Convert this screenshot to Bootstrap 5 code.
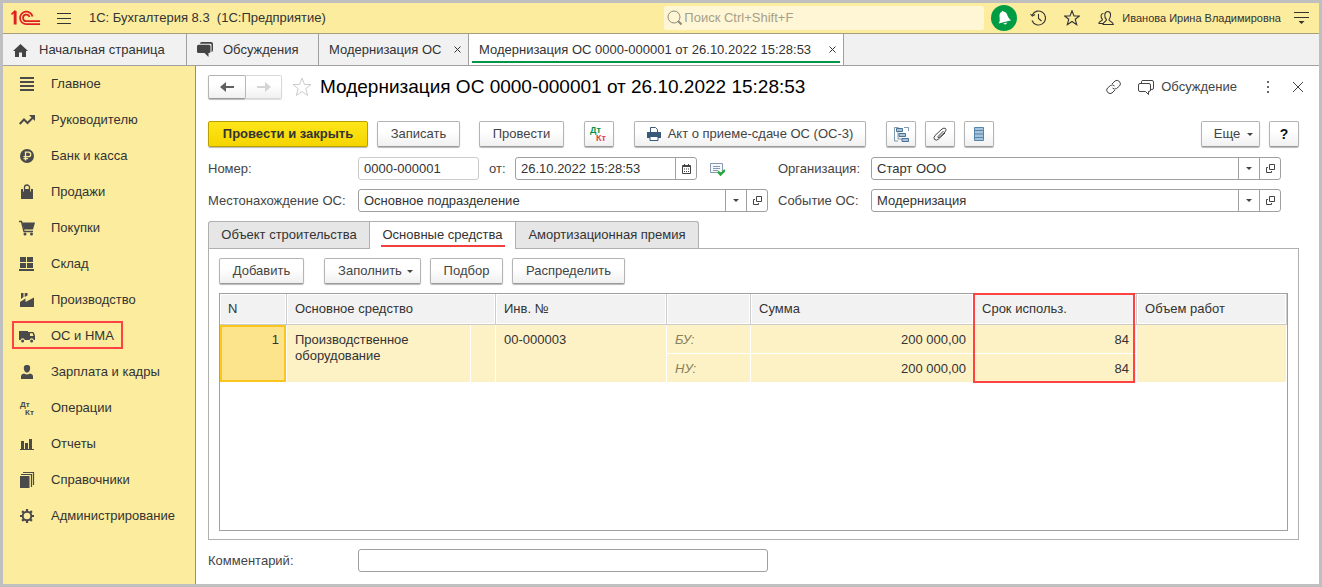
<!DOCTYPE html>
<html lang="ru">
<head>
<meta charset="utf-8">
<meta name="viewport" content="width=device-width, initial-scale=1">
<title>Модернизация ОС 0000-000001 от 26.10.2022 15:28:53</title>
<link href="https://cdn.jsdelivr.net/npm/bootstrap@5.3.0/dist/css/bootstrap.min.css" rel="stylesheet">
<script src="https://cdn.jsdelivr.net/npm/bootstrap@5.3.0/dist/js/bootstrap.bundle.min.js" defer></script>
<style>
body{font-family:"Liberation Sans",Arial,sans-serif;font-size:13px;line-height:16px;color:#333;background:#fff;border:3px solid #bfbfbf;min-height:100vh}
svg{display:block;flex:none}
a{color:inherit;text-decoration:none}
.ic{fill:none;stroke:currentColor}
.plain{border:0;background:none;padding:0;color:inherit}
.gap-s{margin-left:9px}
.gap-l{margin-left:20px}
/* title bar */
.topbar{height:31px;background:#fbec9e;border-bottom:1px solid #a6a07a;padding:0 10px 0 8px}
.app-title{margin-left:18px;white-space:pre}
.finder{width:320px;height:24px;background:#fef6d5;border-radius:2px;padding:0 3px;gap:2px;color:#8d8a78}
.finder input{border:0;background:none;outline:0;flex:1;color:#8d8a78;padding:0;min-width:0}
.finder input::placeholder{color:#a5a08a;opacity:1}
.bell{width:26px;height:26px;border-radius:50%;background:#009c43;margin-left:7px}
.tools{gap:18px;margin-left:13px}
.user{font-size:11px;margin:0 13px 0 8px}
/* window tabs */
.wtabs{height:32px;background:#f1f1f1;border-bottom:1px solid #a0a0a0}
.wtab{border-right:1px solid #a0a0a0;padding:0 7px 0 10px;gap:11px}
.wtab.home{width:184px}
.wtab.talk{width:132px;gap:10px}
.wtab.list{width:150px}
.wtab.current{background:#fff;padding:0 3px;width:375px}
.wtab.current>div{border-bottom:2px solid #009646;height:29px;padding:4px 4px 0 7px}
/* sections */
.side{width:193px;background:#fbec9e;border-right:1px solid #95906f}
.side li{height:36px}
.side a{height:28px;border:2px solid transparent;padding:3px 7px 0 5px;margin:0 0 3px 9px;gap:16px;color:#4a4a4a}
.side a.marked{border-color:#ff4242}
.side span{color:#333}
/* form */
.sheet{padding:9px 20px 12px 12px;color:#444}
.doc-title{font-size:19px;line-height:24px;color:#000;margin:0 0 0 8px}
.to-fav{margin-left:10px;color:#ccc}
.to-chat{margin-left:16px;gap:7px}
.to-more{margin-left:29px}
.to-close{margin:0 -4px 0 23px}
.cmds{margin-top:22px}
.cmd{height:26px;border:1px solid #b4b4b4;border-bottom-color:#999;border-radius:2px;background:linear-gradient(#fff 40%,#f0f0f0);box-shadow:0 1px 1px #bbb;color:#444;padding:0;white-space:nowrap;width:85px}
.cmd.sq{width:30px}
.cmd.help{font-size:14px;color:#111}
.cmd.main{width:160px;background:linear-gradient(#ffe61a,#f5d500);border-color:#b8a000;font-weight:bold;color:#333}
.cmd.act{width:232px;gap:7px}
.cmd.more{width:59px;gap:7px;padding-left:6px}
.cmd.fill{width:97px;gap:5px;padding-left:6px}
.cmd.pick{width:73px}
.cmd.split{width:113px}
.cmd.save{width:83px}
.cmd.post{margin-left:19px}
.navpair .cmd{height:24px;width:38px;color:#606060}
.navpair .cmd:last-child{width:36px;border-color:#d8d8d8;border-left:0;border-radius:0 2px 2px 0;color:#d4d4d4;box-shadow:0 1px 1px #ddd}
.caret{border:3px solid transparent;border-top-color:#444;border-bottom:0}
.fields{margin-top:9px;padding-right:18px}
.fields.first{margin-top:10px}
.lab{width:150px;white-space:nowrap}
.lab2{width:93px;white-space:nowrap}
.lab2.far{margin-left:53px}
.lab2.near{margin-left:10px}
.lab-at{width:36px;padding-left:10px}
.box{height:23px;border:1px solid #a0a0a0;border-radius:3px;background:#fff}
.box input{border:0;outline:0;padding:0 5px;min-width:0;width:100%;background:none;color:#333;height:100%}
.box button{width:21px;flex:none;border:0;border-left:1px solid #a0a0a0;background:none;padding:0;color:#444}
.box.numbox{width:121px;border-color:#ccc}
.box.datebox{width:182px}
.state{margin-left:13px;color:#8a9bb0}
.wide{width:410px}
.ptab{height:27px;width:162px;border:1px solid #b0b0b0;border-bottom:0;background:#e6e6e6;color:#333;padding:0;border-left-width:0}
.ptab:first-child{border-left-width:1px;border-radius:3px 0 0 0}
.ptab:last-child{border-radius:0 3px 0 0;width:183px}
.ptab.active{background:#fff;width:146px;height:28px;margin-bottom:-1px;padding:0 0 2px;position:relative}
.ptab.active span{border-bottom:2px solid #f04040;padding:4px 2px 2px}
.panel{border:1px solid #b0b0b0;padding:9px 10px 8px}
.gridbox{border:1px solid #a0a0a0;margin-top:9px}
.gridtab{width:100%;table-layout:fixed;border-collapse:separate;border-spacing:0;color:#333}
.c-n{width:67px}.c-os{width:184px}.c-pic{width:25px}.c-inv{width:171px}.c-kind{width:84px}.c-sum{width:223px}.c-term{width:163px}
.gridtab th{font-weight:normal;background:#f2f2f2;height:31px;padding:0 8px;border-right:1px solid #ccc;border-bottom:1px solid #ccc;box-shadow:inset 0 0 0 1px #fff;position:relative}
.gridtab td{background:#fdf1c6;height:29px;padding:7px 8px 5px;vertical-align:top;border-right:1px solid #fff;border-bottom:1px solid #fff}
.gridtab td.num{text-align:right;padding-right:7px}
.gridtab .cell{background:#fce48d;box-shadow:inset 0 0 0 2px #fac61e}
.gridtab .kind{font-style:italic;color:#85805f}
.focus-frame{position:absolute;left:-1px;right:1px;top:-1px;height:90px;border:2px solid #ff4242;z-index:2}
</style>
</head>
<body class="d-flex flex-column">
<header class="topbar d-flex align-items-center">
  <svg width="30" height="16" viewBox="0 0 30 16" class="ic" style="color:#e02020" stroke-width="1.7"><path d="M.5 4.500L3.500 1.500V14.500M4.800 1V14.500" stroke-width="1.600"/><path d="M21.500 6.500A6.300 6.300 0 1 0 15.500 14.200H29"/><path d="M18.500 7A3.300 3.300 0 1 0 15.500 11.200H29"/></svg>
  <button class="plain ms-3" aria-label="Меню"><svg width="14" height="13" class="ic"><path d="M0 1.500H14M0 6.500H14M0 11.500H14"/></svg></button>
  <span class="app-title">1С: Бухгалтерия 8.3  (1С:Предприятие)</span>
  <label class="finder d-flex align-items-center ms-auto">
    <svg width="15" height="16" class="ic"><circle cx="7" cy="7" r="6"/><path d="M11 11L14.500 14.500" stroke-width="2"/></svg>
    <input type="search" placeholder="Поиск Ctrl+Shift+F" aria-label="Поиск">
  </label>
  <button class="plain bell d-flex align-items-center justify-content-center" aria-label="Уведомления"><svg width="18" height="18" viewBox="0 0 18 18"><g fill="#fff" transform="rotate(-14 9 9)"><path d="M2.500 13C5 11 4.500 8 5.200 5.500C5.800 3.200 7.500 2.800 8.300 2.500Q9 .8 9.700 2.500C11.500 3 12.500 4 12.800 6C13.200 9 13.500 11 15.500 13Z"/><path d="M7 14.200H11Q9 17 7 14.200Z"/></g></svg></button>
  <div class="tools d-flex align-items-center">
    <button class="plain" aria-label="История"><svg width="16" height="16" class="ic" stroke-width="1.100"><path d="M2.200 5A7 7 0 1 1 2 10.500"/><path d="M.5 4L2.300 6L5 4.500M8.500 4V8.500L11.500 11"/></svg></button>
    <button class="plain" aria-label="Избранное"><svg width="16" height="16" class="ic" stroke-width="1.100"><path d="M8 .8L10 6H15.400L11.200 9.200L12.700 14.700L8 11.500L3.300 14.700L4.800 9.200L.6 6H6Z"/></svg></button>
    <button class="plain" aria-label="Пользователи"><svg width="16" height="16" class="ic" stroke-width="1.100"><path d="M.7 13.500C.7 11 4.500 11 4.500 9.500C2 6.500 3 3.500 5.500 3.500M.7 13.500H5M5 14.500C5 11.500 8.500 11.500 8.500 9.800C6 7 6 1.500 9.800 1.500S13 7 11 9.800C11 11.500 15.300 11.500 15.300 14.500Z"/></svg></button>
  </div>
  <span class="user">Иванова Ирина Владимировна</span>
  <button class="plain" aria-label="Настройки"><svg width="15" height="14" class="ic"><path d="M0 1.500H15M0 6.500H15"/><path d="M4.500 10H10.500L7.500 13Z" fill="currentColor" stroke="none"/></svg></button>
</header>
<nav class="wtabs d-flex">
  <a href="#" class="wtab home d-flex align-items-center"><svg width="15" height="14" viewBox="0 0 15 14" fill="#444"><path d="M7.500 1L15 8H13V14H9V9.500H6V14H2V8H0Z"/></svg><span>Начальная страница</span></a>
  <a href="#" class="wtab talk d-flex align-items-center"><svg width="16" height="15" viewBox="0 0 16 15" fill="#444"><path d="M4.500 0H14Q16 0 16 2V8Q16 10 14.500 10V3Q14.500 1.700 13 1.700H3Q3 0 4.500 0Z"/><path d="M1.500 2.700H12Q13.500 2.700 13.500 4.200V9.500Q13.500 11 12 11H11.500V15L7.500 11H1.500Q0 11 0 9.500V4.200Q0 2.700 1.500 2.700Z"/></svg><span>Обсуждения</span></a>
  <div class="wtab list d-flex align-items-center justify-content-between"><a href="#">Модернизация ОС</a><button class="plain" aria-label="Закрыть"><svg width="7" height="7" class="ic"><path d="M.5.5L6.500 6.500M6.500.5L.5 6.500"/></svg></button></div>
  <div class="wtab current"><div class="d-flex align-items-center justify-content-between"><a href="#">Модернизация ОС 0000-000001 от 26.10.2022 15:28:53</a><button class="plain" aria-label="Закрыть"><svg width="7" height="7" class="ic"><path d="M.5.5L6.500 6.500M6.500.5L.5 6.500"/></svg></button></div></div>
</nav>
<div class="d-flex flex-grow-1">
<aside class="side flex-shrink-0"><ul class="list-unstyled m-0">
  <li class="d-flex align-items-center"><a href="#" class="d-inline-flex align-items-center"><svg width="16" height="16" class="ic" stroke-width="2"><path d="M1 2H15M1 6H15M1 10H15M1 14H15"/></svg><span>Главное</span></a></li>
  <li class="d-flex align-items-center"><a href="#" class="d-inline-flex align-items-center"><svg width="16" height="16" class="ic" stroke-width="2"><path d="M.7 12L5 7.500L8.500 11L14 5.500"/><path d="M10 3H16V9Z" fill="currentColor" stroke="none"/></svg><span>Руководителю</span></a></li>
  <li class="d-flex align-items-center"><a href="#" class="d-inline-flex align-items-center"><svg width="16" height="16" class="ic"><circle cx="8" cy="8" r="7" fill="currentColor" stroke="none"/><path d="M6.500 12.500V4.200H9.500A2.200 2.200 0 0 1 9.500 8.600H4.500M4.500 10.600H9" stroke="#fbec9e" stroke-width="1.300"/></svg><span>Банк и касса</span></a></li>
  <li class="d-flex align-items-center"><a href="#" class="d-inline-flex align-items-center"><svg width="16" height="16" class="ic"><path d="M2 5H14V15H2Z" fill="currentColor" stroke="none"/><path d="M4.500 7.500V5M11.500 7.500V5" stroke="#fbec9e"/><path d="M5.500 7V3.500A2.500 2.500 0 0 1 10.500 3.500V7" stroke-width="1.300"/></svg><span>Продажи</span></a></li>
  <li class="d-flex align-items-center"><a href="#" class="d-inline-flex align-items-center"><svg width="16" height="16" class="ic"><path d="M3 2.500H16L14 9.500H5Z" fill="currentColor" stroke="none"/><path d="M0 1.500H2.500L5 11.500H14" stroke-width="1.400"/><circle cx="6" cy="14" r="1.500" fill="currentColor" stroke="none"/><circle cx="12.500" cy="14" r="1.500" fill="currentColor" stroke="none"/></svg><span>Покупки</span></a></li>
  <li class="d-flex align-items-center"><a href="#" class="d-inline-flex align-items-center"><svg width="16" height="16" fill="currentColor"><path d="M1 1H7V6H1ZM8 1H14V6H8ZM1 7H7V12H1ZM8 7H14V12H8ZM0 13H15V15H0Z"/></svg><span>Склад</span></a></li>
  <li class="d-flex align-items-center"><a href="#" class="d-inline-flex align-items-center"><svg width="16" height="16" fill="currentColor"><path d="M1 15V10L6.500 6.500V10L15 5.500V15ZM2 1H4.500V5L2 7ZM5.700 1H8.500V3.500L5.700 5Z"/></svg><span>Производство</span></a></li>
  <li class="d-flex align-items-center"><a href="#" class="d-inline-flex align-items-center marked"><svg width="16" height="16" viewBox="0 0 16 16" fill="currentColor"><path d="M0 3H9V12H5.800A2.200 2.200 0 0 0 1.500 12H0ZM9 4H14Q15 4 16 8V12H14.800A2.200 2.200 0 0 0 10.500 12H9ZM11 5.300V8H14.500L13.600 5.300Z" fill-rule="evenodd"/><circle cx="3.600" cy="13" r="1.500"/><circle cx="12.600" cy="13" r="1.500"/></svg><span>ОС и НМА</span></a></li>
  <li class="d-flex align-items-center"><a href="#" class="d-inline-flex align-items-center"><svg width="16" height="16" fill="currentColor"><path d="M8 1C11 1 11.500 3 11 5.500C10.500 8 9 8.500 8 8.500S5.500 8 5 5.500C4.500 3 5 1 8 1ZM2 15V12.500Q2 10 5 9.500Q8 11.500 11 9.500Q14 10 14 12.500V15Z"/></svg><span>Зарплата и кадры</span></a></li>
  <li class="d-flex align-items-center"><a href="#" class="d-inline-flex align-items-center"><svg width="16" height="16" fill="currentColor" font-size="8" font-weight="bold"><text x="1" y="7">Дт</text><text x="6" y="15">Кт</text></svg><span>Операции</span></a></li>
  <li class="d-flex align-items-center"><a href="#" class="d-inline-flex align-items-center"><svg width="16" height="16" fill="currentColor"><path d="M1 13H15V14H1ZM2 5H5V13H2ZM6 7H9V13H6ZM10 3H13V13H10Z"/></svg><span>Отчеты</span></a></li>
  <li class="d-flex align-items-center"><a href="#" class="d-inline-flex align-items-center"><svg width="16" height="16" class="ic"><path d="M1 4H10.500V16H1Z" fill="currentColor" stroke="none"/><path d="M2 2.500H12.500V15M4 .5H14.500V13" stroke-width="1.200"/></svg><span>Справочники</span></a></li>
  <li class="d-flex align-items-center"><a href="#" class="d-inline-flex align-items-center"><svg width="16" height="16" class="ic"><circle cx="8" cy="8" r="4.300" stroke-width="2"/><path d="M8 1V3.500M8 12.500V15M1 8H3.500M12.500 8H15M3.100 3.100L4.800 4.800M11.200 11.200L12.900 12.900M3.100 12.900L4.800 11.200M11.200 4.800L12.900 3.100" stroke-width="2.200"/></svg><span>Администрирование</span></a></li>
</ul></aside>
<main class="sheet flex-grow-1 d-flex flex-column">
  <div class="d-flex align-items-center">
    <div class="navpair d-flex"><button class="cmd d-flex align-items-center justify-content-center" aria-label="Назад"><svg width="14" height="10" class="ic" stroke-width="2"><path d="M14 5H4"/><path d="M0 5L6 0V10Z" fill="currentColor" stroke="none"/></svg></button><button class="cmd d-flex align-items-center justify-content-center" aria-label="Вперед"><svg width="14" height="10" class="ic" stroke-width="2"><path d="M0 5H10"/><path d="M14 5L8 0V10Z" fill="currentColor" stroke="none"/></svg></button></div>
    <button class="plain to-fav" aria-label="В избранное"><svg width="20" height="20" class="ic"><path d="M10 1L12.500 7.500H19L13.800 11.700L15.700 18.500L10 14.500L4.300 18.500L6.200 11.700L1 7.500H7.500Z"/></svg></button>
    <h1 class="doc-title">Модернизация ОС 0000-000001 от 26.10.2022 15:28:53</h1>
    <button class="plain ms-auto" aria-label="Ссылка"><svg width="17" height="16" class="ic"><path d="M7 5L10 2Q12 .3 14.500 2.500Q16.500 5 14.500 7L11.500 9.500Q9.500 11 7.500 9M10 11L7 14Q5 15.500 2.700 13.500Q.5 11 2.500 9L5.500 6.500Q7.500 5 9.500 7"/></svg></button>
    <button class="plain to-chat d-flex align-items-center"><svg width="16" height="15" class="ic"><path d="M3.500 3V1.500Q3.500.5 5 .5H14Q15.500.5 15.500 2V8Q15.500 9.500 14 9.500H13M2 3.500H11Q12.500 3.500 12.500 5V10Q12.500 11.500 11 11.500H10.500V14.500L7.500 11.500H2Q.5 11.500.5 10V5Q.5 3.500 2 3.500Z"/></svg>Обсуждение</button>
    <button class="plain to-more" aria-label="Еще"><svg width="4" height="12" fill="#666"><path d="M1 0H3V2H1ZM1 5H3V7H1ZM1 10H3V12H1Z"/></svg></button>
    <button class="plain to-close" aria-label="Закрыть"><svg width="10" height="10" class="ic"><path d="M0 0L10 10M10 0L0 10"/></svg></button>
  </div>
  <div class="cmds d-flex align-items-center">
    <button class="cmd main">Провести и закрыть</button>
    <button class="cmd save gap-s">Записать</button>
    <button class="cmd post">Провести</button>
    <button class="cmd sq gap-l d-flex align-items-center justify-content-center" aria-label="Проводки"><svg width="18" height="16" font-size="9" font-weight="bold"><text x="0" y="7" fill="#009646">Дт</text><text x="6" y="15" fill="#e04545">Кт</text></svg></button>
    <button class="cmd act gap-l d-flex align-items-center justify-content-center"><svg width="14" height="14" class="ic" style="color:#3a5878"><path d="M3.500 5V.5H8.500L10.500 2.500V5" /><path d="M0 5H14V11H0Z" fill="currentColor" stroke="none"/><path d="M3 9.500H11V13.500H3Z" fill="#fff"/></svg>Акт о приеме-сдаче ОС (ОС-3)</button>
    <button class="cmd sq gap-l d-flex align-items-center justify-content-center" aria-label="Структура подчиненности"><svg width="15" height="15" class="ic" style="color:#4b7193"><path d="M4.500.5H.5V14H4M10 .5H14.500V4M4 5V12H8" stroke-width=".7"/><path d="M2.500 1.500H8.500V4.500H2.500ZM5 6.500H11.500V9.500H5ZM8 11.500H14.500V14.500H8Z" fill="#a5c3da"/></svg></button>
    <button class="cmd sq gap-s d-flex align-items-center justify-content-center" aria-label="Файлы"><svg width="14" height="14" class="ic"><path d="M10.500 4L5 9.500Q4.500 11 6 10.500L12 5Q14 2.500 12.500 1.500T9 2L2 8.500Q0 11 1.700 12.500T5.500 12L12 6"/></svg></button>
    <button class="cmd sq gap-s d-flex align-items-center justify-content-center" aria-label="Список"><svg width="10" height="14" class="ic" style="color:#5585a8"><path d="M.5.500H9.500V13.500H.5Z" fill="#a5c3da"/><path d="M0 3.500H10M0 7H10M0 10.500H10"/></svg></button>
    <button class="cmd more ms-auto d-flex align-items-center justify-content-center">Еще<span class="caret"></span></button>
    <button class="cmd sq help gap-s fw-bold">?</button>
  </div>
  <div class="fields first d-flex align-items-center">
    <label class="lab" for="num">Номер:</label>
    <div class="box numbox"><input id="num" value="0000-000001" readonly></div>
    <label class="lab-at" for="date">от:</label>
    <div class="box datebox d-flex"><input id="date" value="26.10.2022 15:28:53"><button class="d-flex align-items-center justify-content-center" aria-label="Календарь"><svg width="9" height="10" class="ic"><path d="M.5 1.500H8.500V9.500H.5ZM0 2.500H9M2.500 0V2M6.500 0V2"/><path d="M2 5H7.500M2 7.500H7.500" stroke-dasharray="1 1"/></svg></button></div>
    <svg width="15" height="14" class="ic state"><path d="M.5 1.500H12.500V10.500H.5Z" fill="#f4f8fb"/><path d="M3 4.500H10M3 6.500H10M3 8.500H8"/><path d="M8 9.500L10.500 12.500L15 8" stroke="#25a83c" stroke-width="2.400"/></svg>
    <label class="lab2 far" for="org">Организация:</label>
    <div class="box d-flex flex-grow-1"><input id="org" value="Старт ООО"><button class="d-flex align-items-center justify-content-center" aria-label="Выбрать"><span class="caret"></span></button><button class="d-flex align-items-center justify-content-center" aria-label="Открыть"><svg width="9" height="9" class="ic"><path d="M3.500.5H8.500V5.500H3.500ZM2 3.500H.5V8.500H5.500V7"/></svg></button></div>
  </div>
  <div class="fields d-flex align-items-center">
    <label class="lab" for="place">Местонахождение ОС:</label>
    <div class="box d-flex wide"><input id="place" value="Основное подразделение"><button class="d-flex align-items-center justify-content-center" aria-label="Выбрать"><span class="caret"></span></button><button class="d-flex align-items-center justify-content-center" aria-label="Открыть"><svg width="9" height="9" class="ic"><path d="M3.500.5H8.500V5.500H3.500ZM2 3.500H.5V8.500H5.500V7"/></svg></button></div>
    <label class="lab2 near" for="event">Событие ОС:</label>
    <div class="box d-flex flex-grow-1"><input id="event" value="Модернизация"><button class="d-flex align-items-center justify-content-center" aria-label="Выбрать"><span class="caret"></span></button><button class="d-flex align-items-center justify-content-center" aria-label="Открыть"><svg width="9" height="9" class="ic"><path d="M3.500.5H8.500V5.500H3.500ZM2 3.500H.5V8.500H5.500V7"/></svg></button></div>
  </div>
  <div class="fields d-flex" role="tablist">
    <button class="ptab" role="tab">Объект строительства</button>
    <button class="ptab active d-flex align-items-center justify-content-center" role="tab" aria-selected="true"><span>Основные средства</span></button>
    <button class="ptab" role="tab">Амортизационная премия</button>
  </div>
  <div class="panel flex-grow-1 d-flex flex-column">
    <div class="d-flex">
      <button class="cmd">Добавить</button>
      <button class="cmd fill gap-l d-flex align-items-center justify-content-center">Заполнить<span class="caret"></span></button>
      <button class="cmd pick gap-s">Подбор</button>
      <button class="cmd split gap-s">Распределить</button>
    </div>
    <div class="gridbox flex-grow-1">
      <table class="gridtab">
        <colgroup><col class="c-n"><col class="c-os"><col class="c-pic"><col class="c-inv"><col class="c-kind"><col class="c-sum"><col class="c-term"><col></colgroup>
        <thead><tr><th>N</th><th colspan="2">Основное средство</th><th>Инв. №</th><th></th><th>Сумма</th><th>Срок использ.<div class="focus-frame"></div></th><th>Объем работ</th></tr></thead>
        <tbody>
          <tr><td rowspan="2" class="cell num">1</td><td rowspan="2">Производственное оборудование</td><td rowspan="2"></td><td rowspan="2">00-000003</td><td class="kind">БУ:</td><td class="num">200 000,00</td><td class="num">84</td><td rowspan="2"></td></tr>
          <tr><td class="kind">НУ:</td><td class="num">200 000,00</td><td class="num">84</td></tr>
        </tbody>
      </table>
    </div>
  </div>
  <div class="fields d-flex align-items-center">
    <label class="lab" for="note">Комментарий:</label>
    <div class="box wide"><input id="note"></div>
  </div>
</main>
</div>
</body>
</html>
